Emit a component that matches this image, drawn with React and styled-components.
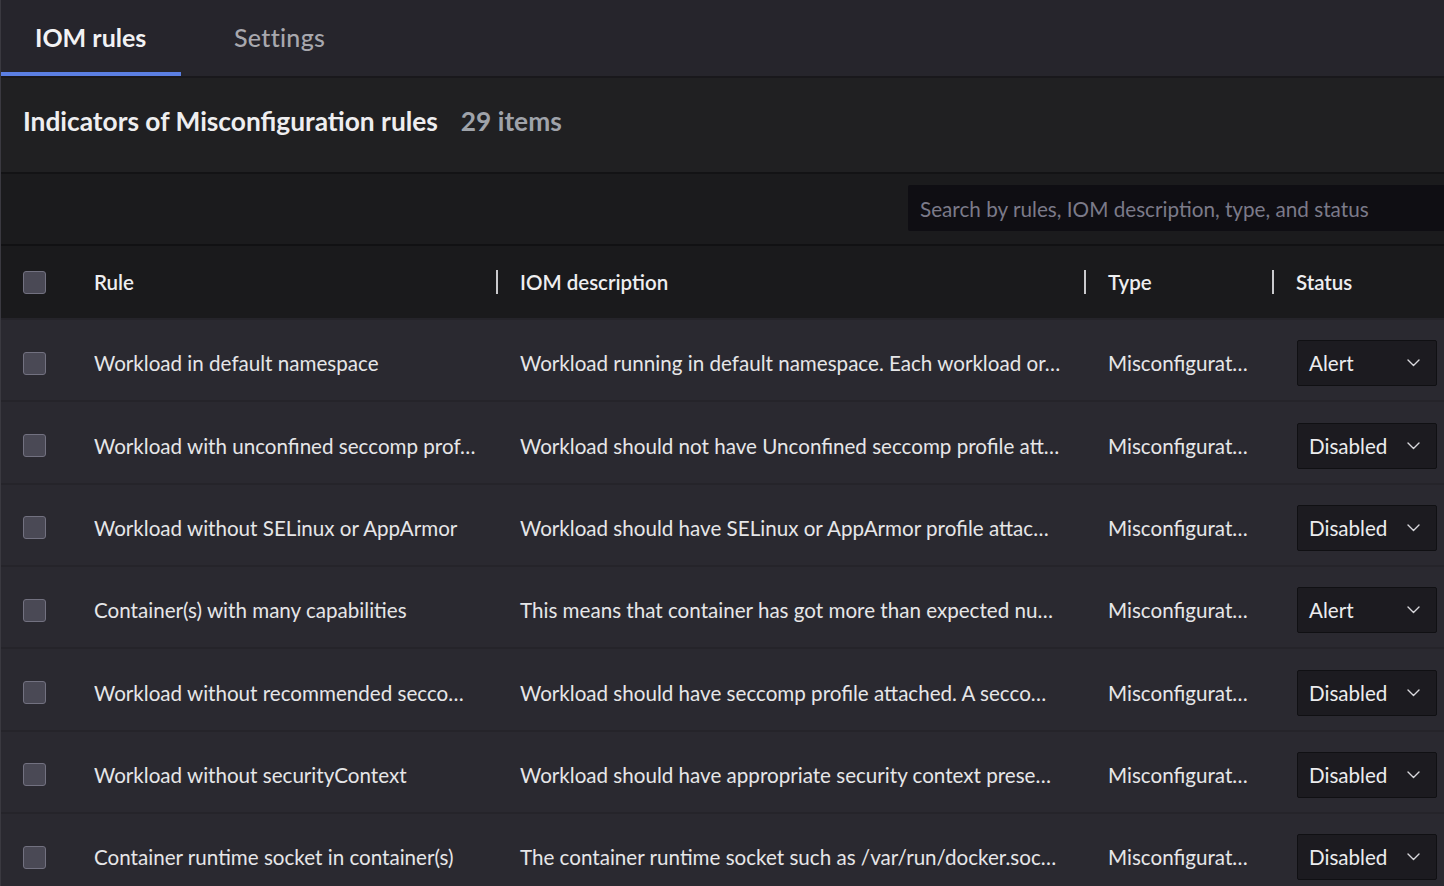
import * as React from 'react'
import styled, { createGlobalStyle } from 'styled-components'

const GlobalStyle = createGlobalStyle`
  html, body {
    margin: 0;
    padding: 0;
    background: #2a2930;
  }
  body {
    font-family: Lato, 'Noto Sans', sans-serif;
    color: #e8e8ea;
    -webkit-font-smoothing: antialiased;
  }
`

const RULES = [
  {
    rule: 'Workload in default namespace',
    desc: 'Workload running in default namespace. Each workload or…',
    status: 'Alert',
  },
  {
    rule: 'Workload with unconfined seccomp prof…',
    desc: 'Workload should not have Unconfined seccomp profile att…',
    status: 'Disabled',
  },
  {
    rule: 'Workload without SELinux or AppArmor',
    desc: 'Workload should have SELinux or AppArmor profile attac…',
    status: 'Disabled',
  },
  {
    rule: 'Container(s) with many capabilities',
    desc: 'This means that container has got more than expected nu…',
    status: 'Alert',
  },
  {
    rule: 'Workload without recommended secco…',
    desc: 'Workload should have seccomp profile attached. A secco…',
    status: 'Disabled',
  },
  {
    rule: 'Workload without securityContext',
    desc: 'Workload should have appropriate security context prese…',
    status: 'Disabled',
  },
  {
    rule: 'Container runtime socket in container(s)',
    desc: 'The container runtime socket such as /var/run/docker.soc…',
    status: 'Disabled',
  },
]

const Page = styled.div`
  width: 1444px;
  height: 886px;
  overflow: hidden;
  background: #2a2930;
  border-left: 1px solid #3a3940;
  box-sizing: border-box;
`

const TabBar = styled.div`
  height: 78px;
  box-sizing: border-box;
  display: flex;
  background: #26252c;
  border-bottom: 2px solid #19181c;
`

const Tab = styled.div`
  width: ${(p) => p.width}px;
  box-sizing: border-box;
  padding-left: ${(p) => p.pad}px;
  padding-top: 2px;
  display: flex;
  align-items: center;
  font-size: 25px;
  font-weight: ${(p) => (p.active ? 700 : 500)};
  letter-spacing: ${(p) => (p.active ? 0 : 0.3)}px;
  color: ${(p) => (p.active ? '#f2f2f4' : '#a8a8ae')};
  border-bottom: 4px solid ${(p) => (p.active ? '#5b7fe3' : 'transparent')};
`

const TitleBar = styled.div`
  height: 96px;
  box-sizing: border-box;
  display: flex;
  align-items: center;
  gap: 23px;
  padding: 0 22px 8px;
  background: #202022;
  border-bottom: 2px solid #131315;
`

const Title = styled.h1`
  margin: 0;
  font-size: 26.3px;
  font-weight: 700;
  color: #eeeef0;
`

const Count = styled.span`
  font-size: 26.3px;
  font-weight: 700;
  color: #9fa3aa;
`

const SearchBar = styled.div`
  height: 72px;
  box-sizing: border-box;
  display: flex;
  align-items: center;
  justify-content: flex-end;
  background: #1b1b1d;
  border-bottom: 2px solid #111113;
`

const SearchInput = styled.input`
  width: 536px;
  height: 46px;
  box-sizing: border-box;
  margin-bottom: 2px;
  padding: 2px 12px 0;
  border: none;
  border-radius: 2px 0 0 2px;
  background: #0f0e13;
  font-family: inherit;
  font-size: 20.7px;
  color: #e8e8ea;
  outline: none;
  &::placeholder {
    color: #7b7a89;
  }
`

const Grid = styled.div`
  display: grid;
  grid-template-columns: 93px 402px 588px 188px 1fr;
  align-items: center;
`

const HeadRow = styled(Grid)`
  height: 72px;
  background: #1a1a1c;
`

const Row = styled(Grid)`
  height: 82.35px;
  box-sizing: border-box;
  padding-top: 6px;
  background: #2a2930;
  border-top: 2px solid #25242a;
`

const CheckCell = styled.div`
  padding-left: 22px;
  display: flex;
  align-items: center;
`

const Checkbox = styled.span`
  display: block;
  width: 23px;
  height: 23px;
  box-sizing: border-box;
  border-radius: 3px;
  background: #4a4955;
  border: 1.5px solid #727180;
`

const HeadCell = styled.div`
  position: relative;
  padding-left: ${(p) => (p.first ? 0 : 24)}px;
  font-size: 20.5px;
  font-weight: 600;
  color: #eeeef0;
  &::before {
    content: '';
    display: ${(p) => (p.first ? 'none' : 'block')};
    position: absolute;
    left: 0;
    top: 50%;
    width: 1.5px;
    height: 24px;
    margin-top: -12px;
    background: #c9c9cc;
  }
`

const Cell = styled.div`
  padding-left: ${(p) => (p.first ? 0 : 24)}px;
  font-size: 20.6px;
  color: #e6e6e8;
  white-space: nowrap;
  overflow: hidden;
`

const StatusCell = styled.div`
  padding-left: 25px;
`

const Select = styled.div`
  width: 140px;
  height: 46px;
  box-sizing: border-box;
  display: flex;
  align-items: center;
  justify-content: space-between;
  padding: 0 16px 0 11px;
  background: #1c1b20;
  border: 1.5px solid #101013;
  border-radius: 2px;
  font-size: 20.6px;
  color: #ececee;
`

const Chevron = () => (
  <svg width="13" height="8" viewBox="0 0 13 8" fill="none">
    <path d="M1 1l5.5 5.5L12 1" stroke="#d8d8dc" strokeWidth="1.4" strokeLinecap="round" strokeLinejoin="round" />
  </svg>
)

export default function App() {
  return (
    <Page>
      <GlobalStyle />
      <TabBar>
        <Tab active width={180} pad={34}>IOM rules</Tab>
        <Tab width={200} pad={53}>Settings</Tab>
      </TabBar>
      <TitleBar>
        <Title>Indicators of Misconfiguration rules</Title>
        <Count>29 items</Count>
      </TitleBar>
      <SearchBar>
        <SearchInput placeholder="Search by rules, IOM description, type, and status" />
      </SearchBar>
      <HeadRow>
        <CheckCell>
          <Checkbox />
        </CheckCell>
        <HeadCell first>Rule</HeadCell>
        <HeadCell>IOM description</HeadCell>
        <HeadCell>Type</HeadCell>
        <HeadCell>Status</HeadCell>
      </HeadRow>
      {RULES.map((r) => (
        <Row key={r.rule}>
          <CheckCell>
            <Checkbox />
          </CheckCell>
          <Cell first>{r.rule}</Cell>
          <Cell>{r.desc}</Cell>
          <Cell>Misconfigurat…</Cell>
          <StatusCell>
            <Select>
              {r.status}
              <Chevron />
            </Select>
          </StatusCell>
        </Row>
      ))}
    </Page>
  )
}
